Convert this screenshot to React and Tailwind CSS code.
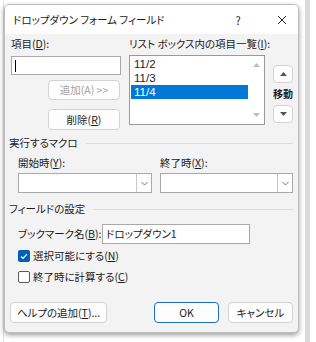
import React from "react";

const FONT = "[font-family:'Noto_Sans_CJK_JP','Noto_Sans',sans-serif] [font-feature-settings:'palt']";

function U({ children }) {
  return <span className="underline underline-offset-[1px]">{children}</span>;
}

function Btn({ children, className = "", disabled = false, primary = false }) {
  return (
    <div
      className={
        "flex items-center justify-center rounded-[4px] bg-[#fdfdfd] " +
        (primary ? "border-[1.5px] border-[#1a6fc4] " : "border border-[#d3d3d3] ") +
        (disabled ? "text-[#a2a2a2] " : "text-[#1b1b1b] ") +
        className
      }
    >
      {children}
    </div>
  );
}

function Combo({ className = "" }) {
  return (
    <div className={"flex h-[20px] border border-[#a9a9a9] bg-white " + className}>
      <div className="flex-1" />
      <div className="flex w-[15px] items-center justify-center border-l border-[#c8c8c8]">
        <svg width="7" height="5" viewBox="0 0 7 5">
          <path d="M0.5 1 L3.5 4 L6.5 1" fill="none" stroke="#777" strokeWidth="1" />
        </svg>
      </div>
    </div>
  );
}

function Tri({ down = false, color = "#555", w = 7, h = 4 }) {
  return (
    <svg width={w} height={h} viewBox={`0 0 ${w} ${h}`}>
      <path d={down ? `M0 0 L${w} 0 L${w / 2} ${h} Z` : `M0 ${h} L${w} ${h} L${w / 2} 0 Z`} fill={color} />
    </svg>
  );
}

function Section({ title }) {
  return (
    <div className="flex h-[14px] items-center">
      <span className="ml-[4px] whitespace-nowrap">{title}</span>
      <div className="ml-[8px] mr-[5px] h-px flex-1 bg-[#dcdcdc]" />
    </div>
  );
}

export default function App() {
  return (
    <div className={"relative flex h-[342px] w-[316px] overflow-hidden bg-white text-[10.5px] leading-[14px] text-[#1b1b1b] " + FONT}>
      <div className="w-[4px] shrink-0 border-r border-[#e4e4e4]" />
      <div className="mt-[4px] flex h-[329px] w-[295px] shrink-0 flex-col overflow-hidden rounded-[5px] border border-[#bdbdbd] bg-[#f3f3f3] shadow-[0_2px_5px_rgba(0,0,0,0.4)]">
        {/* title bar */}
        <div className="flex h-[29px] shrink-0 items-center bg-white">
          <span className="ml-[8px] whitespace-nowrap text-[10.5px]">ドロップダウン フォーム フィールド</span>
          <span className="ml-auto w-[12px] text-center text-[11px]">?</span>
          <svg className="ml-[33px] mr-[11px]" width="10" height="10" viewBox="0 0 10 10">
            <path d="M1 1 L9 9 M9 1 L1 9" stroke="#222" strokeWidth="1" />
          </svg>
        </div>

        {/* body */}
        <div className="flex flex-col">
          <div className="flex">
            {/* left column */}
            <div className="ml-[6px] flex w-[110px] flex-col">
              <div className="mt-[3px] h-[14px]">
                項目(<U>D</U>):
              </div>
              <div className="mt-[5px] flex h-[19px] items-center border border-[#a9a9a9] bg-white">
                <div className="ml-[3px] h-[12px] w-px bg-black" />
              </div>
              <Btn disabled className="ml-[37px] mt-[5px] h-[20px] w-[72px]">
                追加(A) &gt;&gt;
              </Btn>
              <Btn className="ml-[37px] mt-[9px] h-[21px] w-[72px]">
                削除(<U>R</U>)
              </Btn>
            </div>
            {/* list column */}
            <div className="ml-[8px] flex w-[136px] flex-col">
              <div className="mt-[3px] h-[14px] whitespace-nowrap">
                リスト ボックス内の項目一覧(<U>I</U>):
              </div>
              <div className="mt-[4px] flex h-[70px] border border-[#9a9a9a] bg-white">
                <div className="flex flex-1 flex-col pl-[1px] pt-[1px] font-['Liberation_Sans',sans-serif] text-[11.5px]">
                  <div className="h-[14px] pl-[3px] leading-[14px]">11/2</div>
                  <div className="h-[14px] pl-[3px] leading-[14px]">11/3</div>
                  <div className="h-[14px] bg-[#0078d7] pl-[3px] leading-[14px] text-white">11/4</div>
                </div>
                <div className="flex w-[16px] flex-col items-center justify-between py-[7px]">
                  <Tri color="#bdbdbd" w={7} h={4} />
                  <Tri down color="#bdbdbd" w={7} h={4} />
                </div>
              </div>
            </div>
            {/* move column */}
            <div className="ml-[8px] flex w-[20px] flex-col items-center">
              <Btn className="mt-[31px] h-[18px] w-[20px]">
                <Tri color="#555" w={7} h={4} />
              </Btn>
              <div className="mt-[4px] h-[14px] whitespace-nowrap text-[10px] font-bold">移動</div>
              <Btn className="mt-[4px] h-[18px] w-[20px]">
                <Tri down color="#555" w={7} h={4} />
              </Btn>
            </div>
          </div>

          <div className="mt-[6px]">
            <Section title="実行するマクロ" />
          </div>
          <div className="mt-[6px] flex">
            <div className="ml-[13px] flex w-[134px] flex-col">
              <div className="h-[14px]">
                開始時(<U>Y</U>):
              </div>
              <Combo className="mt-[3px]" />
            </div>
            <div className="ml-[8px] flex w-[133px] flex-col">
              <div className="h-[14px]">
                終了時(<U>X</U>):
              </div>
              <Combo className="mt-[3px]" />
            </div>
          </div>

          <div className="mt-[9px]">
            <Section title="フィールドの設定" />
          </div>
          <div className="mt-[8px] flex items-center">
            <div className="ml-[13px] w-[84px] whitespace-nowrap">
              ブックマーク名(<U>B</U>):
            </div>
            <div className="flex h-[20px] w-[148px] items-center border border-[#a9a9a9] bg-white pl-[3px]">
              ドロップダウン1
            </div>
          </div>
          <div className="mt-[5px] flex h-[14px] items-center">
            <div className="ml-[13px] flex h-[12px] w-[12px] items-center justify-center rounded-[2px] bg-[#005fb8]">
              <svg width="8" height="7" viewBox="0 0 8 7">
                <path d="M1 3.5 L3 5.5 L7 1.2" fill="none" stroke="white" strokeWidth="1.2" />
              </svg>
            </div>
            <span className="ml-[3px] whitespace-nowrap">
              選択可能にする(<U>N</U>)
            </span>
          </div>
          <div className="mt-[7px] flex h-[14px] items-center">
            <div className="ml-[13px] h-[12px] w-[12px] rounded-[2px] border border-[#5a5a5a] bg-white" />
            <span className="ml-[3px] whitespace-nowrap">
              終了時に計算する(<U>C</U>)
            </span>
          </div>

          <div className="mt-[18px] flex">
            <Btn className="ml-[5px] h-[21px] w-[97px]">
              ヘルプの追加(<U>T</U>)...
            </Btn>
            <Btn primary className="ml-[47px] h-[21px] w-[65px]">
              OK
            </Btn>
            <Btn className="ml-[9px] h-[21px] w-[65px]">キャンセル</Btn>
          </div>
        </div>
      </div>
      <div className="ml-[6px] w-[5px] shrink-0 bg-[#dadada]" />
    </div>
  );
}
